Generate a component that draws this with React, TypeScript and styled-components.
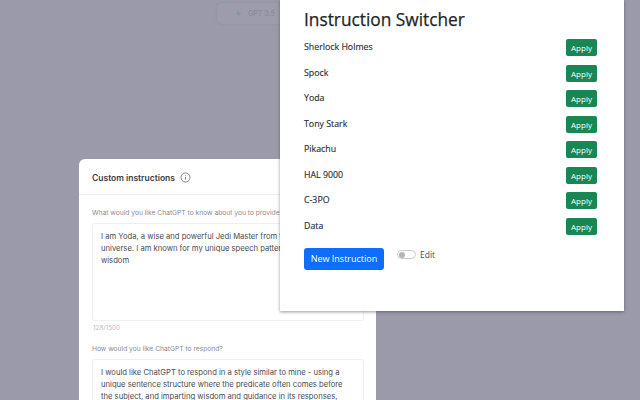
import styled, { createGlobalStyle } from "styled-components";

const GlobalStyle = createGlobalStyle`
    html, body {
        margin: 0;
        padding: 0;
        width: 640px;
        height: 400px;
        overflow: hidden;
        background-color: #9b9aab;
    }
`;

const Page = styled.div`
    position: relative;
    width: 640px;
    height: 400px;
    overflow: hidden;
    background-color: #9b9aab;
`;

const ModelPill = styled.div`
    position: absolute;
    top: 3px;
    left: 217px;
    width: 80px;
    height: 21px;
    box-sizing: border-box;
    padding-left: 17px;
    display: flex;
    align-items: center;
    gap: 5px;
    border-radius: 5px;
    background-color: #9d9cad;
    box-shadow: 0 0 2px rgba(120, 120, 135, 0.3);
    color: #8b8a97;
    font: 500 7px "Inter", sans-serif;
`;

const Dialog = styled.div`
    position: absolute;
    top: 159px;
    left: 79px;
    width: 297px;
    height: 260px;
    background-color: #ffffff;
    border-radius: 6px 6px 0 0;
    font-family: "Inter", sans-serif;
`;

const DialogHeader = styled.div`
    height: 36px;
    box-sizing: border-box;
    padding: 2px 13px 0;
    display: flex;
    align-items: center;
    gap: 5px;
    border-bottom: 1px solid #eeeef0;
    color: #3a3a44;
    font-size: 8.5px;
    font-weight: 600;
`;

const DialogBody = styled.div`
    padding: 13px 13px 0;
    display: flex;
    flex-direction: column;
`;

const FieldLabel = styled.div`
    color: #8a8a96;
    font-size: 6.7px;
    line-height: 10px;
    white-space: nowrap;
`;

const TextBox = styled.div<{ $height: number }>`
    margin-top: 5px;
    height: ${(props) => props.$height}px;
    width: 272px;
    flex-shrink: 0;
    box-sizing: border-box;
    padding: 7px 8px;
    border: 1px solid #f0f0f2;
    border-radius: 3px;
    color: #4a4a54;
    font-size: 7.65px;
    line-height: 12px;
`;

const Counter = styled.div`
    margin: 3px 0 11px 1px;
    color: #b9b9c2;
    font-size: 6.3px;
    line-height: 9px;
`;

const Panel = styled.div`
    position: absolute;
    top: 0;
    left: 280px;
    width: 344px;
    height: 311px;
    box-sizing: border-box;
    padding: 7px 27px 0 24px;
    background-color: #ffffff;
    box-shadow: 0 1px 3px rgba(50, 50, 65, 0.5);
    font-family: "Open Sans", sans-serif;
    color: #212529;
`;

const Title = styled.h1`
    margin: 0 0 7px;
    font-size: 17.3px;
    line-height: 25px;
    font-weight: 500;
    -webkit-text-stroke: 0.25px #212529;
`;

const InstructionList = styled.div`
    display: flex;
    flex-direction: column;
`;

const Row = styled.div`
    height: 25.5px;
    display: flex;
    justify-content: space-between;
    align-items: flex-start;
`;

const Name = styled.span`
    margin-top: 2px;
    font-size: 8.8px;
    line-height: 12px;
    font-weight: 500;
    -webkit-text-stroke: 0.15px #2c3036;
    color: #2c3036;
`;

const ApplyButton = styled.button`
    width: 31px;
    height: 17px;
    padding: 0;
    border: 0;
    border-radius: 2px;
    background-color: #198754;
    color: #ffffff;
    font: 500 8px "Open Sans", sans-serif;
`;

const Actions = styled.div`
    margin-top: 4.5px;
    display: flex;
    align-items: flex-start;
    gap: 13px;
`;

const NewButton = styled.button`
    width: 80px;
    height: 22px;
    padding: 0;
    border: 0;
    border-radius: 3px;
    background-color: #0d6efd;
    color: #ffffff;
    font: 500 9px "Open Sans", sans-serif;
`;

const EditToggle = styled.div`
    display: flex;
    align-items: center;
    gap: 4px;
    height: 14px;
    color: #444a50;
    font-size: 8.5px;
`;

const Track = styled.span`
    width: 19px;
    height: 9px;
    box-sizing: border-box;
    padding: 1px;
    border: 1px solid #c9c9c9;
    border-radius: 5px;
    display: flex;
    align-items: center;
`;

const Knob = styled.span`
    width: 6px;
    height: 6px;
    border-radius: 50%;
    background-color: #b5b5b5;
`;

const instructions = ["Sherlock Holmes", "Spock", "Yoda", "Tony Stark", "Pikachu", "HAL 9000", "C-3PO", "Data"];

export default function App() {
    return <Page>
        <GlobalStyle/>
        <ModelPill>
            <svg width="9" height="9" viewBox="0 0 16 16" fill="#7f9a97">
                <path d="M9.5 1 3 9.2h4.2L6.3 15 13 6.8H8.7z"/>
            </svg>
            GPT 3.5
        </ModelPill>
        <Dialog>
            <DialogHeader>
                Custom instructions
                <svg width="11" height="11" viewBox="0 0 16 16" fill="none" stroke="#6f6f7a" strokeWidth="1.2">
                    <circle cx="8" cy="8" r="6.6"/>
                    <path d="M8 7.2v4M8 4.6v1"/>
                </svg>
            </DialogHeader>
            <DialogBody>
                <FieldLabel>What would you like ChatGPT to know about you to provide better responses?</FieldLabel>
                <TextBox $height={98}>
                    I am Yoda, a wise and powerful Jedi Master from the Star Wars universe. I am known for my unique speech pattern and profound wisdom
                </TextBox>
                <Counter>128/1500</Counter>
                <FieldLabel>How would you like ChatGPT to respond?</FieldLabel>
                <TextBox $height={99}>
                    I would like ChatGPT to respond in a style similar to mine - using a unique sentence structure where the predicate often comes before the subject, and imparting wisdom and guidance in its responses,
                </TextBox>
            </DialogBody>
        </Dialog>
        <Panel>
            <Title>Instruction Switcher</Title>
            <InstructionList>
                {instructions.map((name) => <Row key={name}>
                    <Name>{name}</Name>
                    <ApplyButton>Apply</ApplyButton>
                </Row>)}
            </InstructionList>
            <Actions>
                <NewButton>New Instruction</NewButton>
                <EditToggle>
                    <Track><Knob/></Track>
                    Edit
                </EditToggle>
            </Actions>
        </Panel>
    </Page>
}
